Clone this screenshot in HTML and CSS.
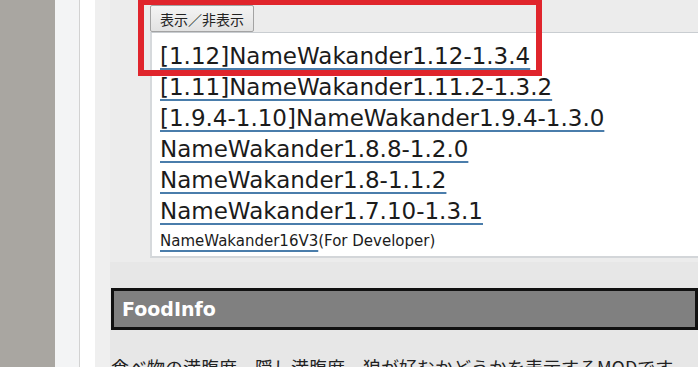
FILE: index.html
```html
<!DOCTYPE html>
<html lang="ja">
<head>
  <meta charset="UTF-8">
  <title>NameWakander</title>
  <link rel="stylesheet" href="styles.css">
</head>
<body>

  <div class="rail"></div>
  <div class="side"></div>
  <div class="gap"></div>
  <div class="gutter"></div>

  <div class="main">
    <div class="mod-box">
      <button class="toggle">表示／非表示</button>
      <div class="panel">
        <a class="dl" href="#">[1.12]NameWakander1.12-1.3.4</a>
        <a class="dl" href="#">[1.11]NameWakander1.11.2-1.3.2</a>
        <a class="dl" href="#">[1.9.4-1.10]NameWakander1.9.4-1.3.0</a>
        <a class="dl" href="#">NameWakander1.8.8-1.2.0</a>
        <a class="dl" href="#">NameWakander1.8-1.1.2</a>
        <a class="dl" href="#">NameWakander1.7.10-1.3.1</a>
        <div class="dev"><a href="#">NameWakander16V3</a>(For Developer)</div>
      </div>
    </div>

    <h2 class="mod-title">FoodInfo</h2>
    <p class="mod-desc">食べ物の満腹度、隠し満腹度、狼が好むかどうかを表示するMODです。</p>

    <div class="mark"></div>
  </div>

</body>
</html>
```

FILE: styles.css
```css
* {
  box-sizing: border-box;
}

body {
  margin: 0;
  height: 367px;
  overflow: hidden;
  display: flex;
  background-color: #e7e7e7;
  font-family: 'DejaVu Sans', Verdana, sans-serif;
}

.rail {
  width: 55px;
  background-color: #a9a6a1;
}

.side {
  width: 25px;
  background-color: #f3f4f5;
  border-right: 1px solid #d2d2d2;
}

.gap {
  width: 15px;
  background-color: #ffffff;
}

.gutter {
  width: 15px;
  background-color: #efefef;
}

.main {
  flex: 1;
  position: relative;
  background-color: #e7e7e7;
  min-width: 0;
}

.mod-box {
  background-color: #ececec;
  padding: 5px 0 4px 40px;
}

.toggle {
  display: block;
  height: 27px;
  padding: 0 9px;
  font-family: 'Noto Sans CJK JP', sans-serif;
  font-size: 14px;
  color: #222;
  background: linear-gradient(#f4f4f4, #e2e2e2);
  border: 1px solid #a3a3a3;
  border-radius: 2px;
}

.panel {
  background-color: #ffffff;
  border-top: 1px solid #c9cdd1;
  border-left: 2px solid #d6d9dc;
  border-bottom: 2px solid #d3d6d9;
  padding: 8px 0 5px 8px;
  white-space: nowrap;
}

.dl {
  display: block;
  width: max-content;
  font-size: 23px;
  line-height: 31px;
  color: #1b1b1b;
  text-decoration: underline;
  text-decoration-color: #4a7dab;
  text-decoration-thickness: 2px;
  text-underline-offset: 4px;
}

.dev {
  margin-top: 4px;
  font-size: 15px;
  line-height: 20px;
  color: #1b1b1b;
}

.dev a {
  color: #1b1b1b;
  text-decoration: underline;
  text-decoration-color: #4a7dab;
  text-decoration-thickness: 2px;
  text-underline-offset: 4px;
}

.mod-title {
  margin: 26px 0 0 1px;
  height: 42px;
  padding-left: 8px;
  background-color: #808080;
  border: 3px solid #111;
  color: #fff;
  font-size: 19px;
  line-height: 36px;
  font-weight: bold;
}

.mod-desc {
  margin: 24px 0 0 1px;
  font-family: 'Noto Sans CJK JP', sans-serif;
  font-size: 18px;
  line-height: 27px;
  color: #222;
  white-space: nowrap;
}

/* red highlight drawn over the first download row */
.mark {
  position: absolute;
  left: 28px;
  top: -1px;
  width: 404px;
  height: 77px;
  border: 6px solid #e0252c;
}
```
